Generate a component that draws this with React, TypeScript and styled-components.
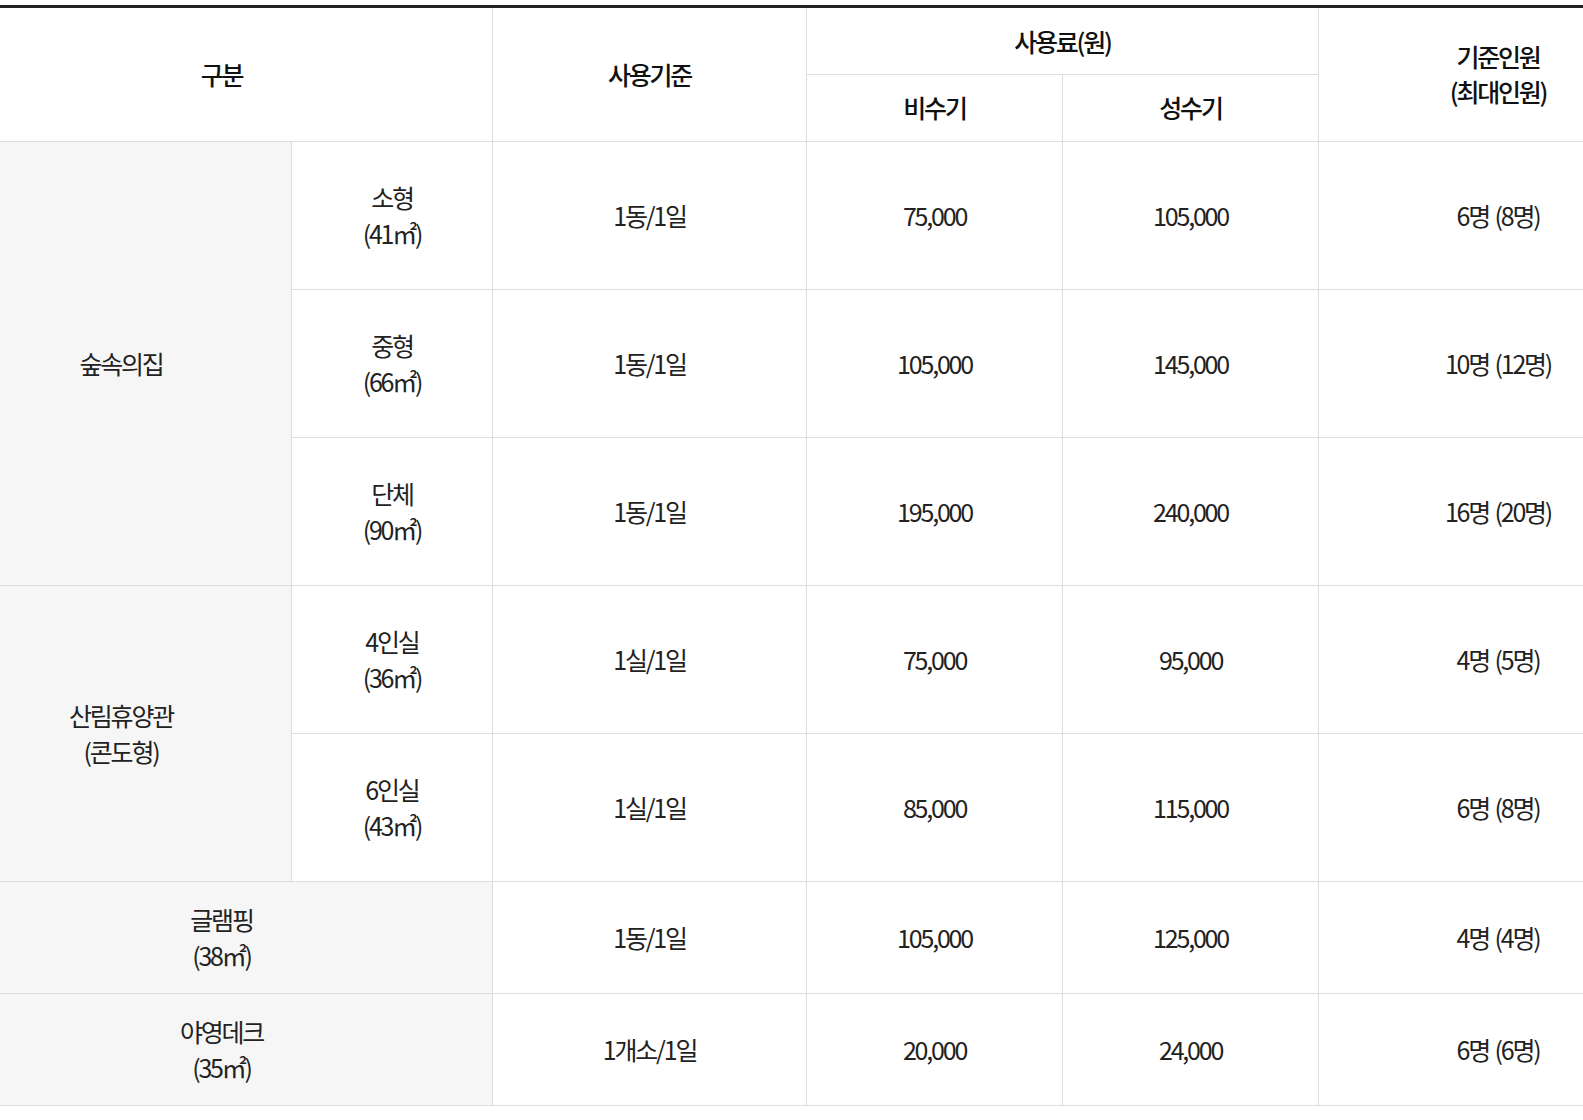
import React, { FC, useLayoutEffect, useRef } from "react";
import styled, { createGlobalStyle } from "styled-components";

interface IRoom {
  name: string;
  area: string;
  unit: string;
  low: string;
  high: string;
  people: string;
}

interface IGroup {
  title: string[];
  rooms: IRoom[];
}

const groups: IGroup[] = [
  {
    title: ["숲속의집"],
    rooms: [
      { name: "소형", area: "41", unit: "1동/1일", low: "75,000", high: "105,000", people: "6명 (8명)" },
      { name: "중형", area: "66", unit: "1동/1일", low: "105,000", high: "145,000", people: "10명 (12명)" },
      { name: "단체", area: "90", unit: "1동/1일", low: "195,000", high: "240,000", people: "16명 (20명)" },
    ],
  },
  {
    title: ["산림휴양관", "(콘도형)"],
    rooms: [
      { name: "4인실", area: "36", unit: "1실/1일", low: "75,000", high: "95,000", people: "4명 (5명)" },
      { name: "6인실", area: "43", unit: "1실/1일", low: "85,000", high: "115,000", people: "6명 (8명)" },
    ],
  },
];

const singles: IRoom[] = [
  { name: "글램핑", area: "38", unit: "1동/1일", low: "105,000", high: "125,000", people: "4명 (4명)" },
  { name: "야영데크", area: "35", unit: "1개소/1일", low: "20,000", high: "24,000", people: "6명 (6명)" },
];

const colWidths = [341, 201, 314, 256, 256, 359];

const Lines: FC<{ lines: string[] }> = ({ lines }) => (
  <>
    {lines.map((line, i) => (
      <Line key={i}>{line}</Line>
    ))}
  </>
);

const App: FC = () => {
  const scrollRef = useRef<HTMLDivElement>(null);

  // the table is shown scrolled a little to the right
  useLayoutEffect(() => {
    if (scrollRef.current) scrollRef.current.scrollLeft = 50;
  }, []);

  return (
    <>
      <GlobalStyle />
      <Root>
        <ScrollArea ref={scrollRef}>
          <Table>
            <colgroup>
              {colWidths.map((w, i) => (
                <col key={i} style={{ width: w }} />
              ))}
            </colgroup>
            <thead>
              <Row $height={68}>
                <Th rowSpan={2} colSpan={2}>
                  구분
                </Th>
                <Th rowSpan={2}>사용기준</Th>
                <Th colSpan={2}>사용료(원)</Th>
                <Th rowSpan={2}>
                  <Lines lines={["기준인원", "(최대인원)"]} />
                </Th>
              </Row>
              <Row $height={66.5}>
                <Th>비수기</Th>
                <Th>성수기</Th>
              </Row>
            </thead>
            <tbody>
              {groups.map((group) =>
                group.rooms.map((room, i) => (
                  <Row key={room.name} $height={148}>
                    {i === 0 && (
                      <Td rowSpan={group.rooms.length} $shade>
                        <Lines lines={group.title} />
                      </Td>
                    )}
                    <Td>
                      <Lines lines={[room.name, `(${room.area}㎡)`]} />
                    </Td>
                    <Td>{room.unit}</Td>
                    <Td>{room.low}</Td>
                    <Td>{room.high}</Td>
                    <Td>{room.people}</Td>
                  </Row>
                ))
              )}
              {singles.map((room) => (
                <Row key={room.name} $height={112}>
                  <Td colSpan={2} $shade>
                    <Lines lines={[room.name, `(${room.area}㎡)`]} />
                  </Td>
                  <Td>{room.unit}</Td>
                  <Td>{room.low}</Td>
                  <Td>{room.high}</Td>
                  <Td>{room.people}</Td>
                </Row>
              ))}
            </tbody>
          </Table>
        </ScrollArea>
      </Root>
    </>
  );
};

export default App;

const GlobalStyle = createGlobalStyle`
  html, body {
    margin: 0;
    padding: 0;
    background: #ffffff;
    overflow: hidden;
  }

  body {
    font-family: "Noto Sans CJK KR", "Noto Sans", sans-serif;
    color: #222222;
  }
`;

const Root = styled.div`
  width: 100%;
  padding-top: 5px;
`;

const ScrollArea = styled.div`
  width: 100%;
  overflow-x: auto;
  scrollbar-width: none;

  &::-webkit-scrollbar {
    display: none;
  }
`;

const Table = styled.table`
  width: 1727px;
  table-layout: fixed;
  border-collapse: collapse;
  border-top: 3px solid #222222;
  font-size: 25px;
  letter-spacing: -2.2px;
  word-spacing: 2px;
`;

const Row = styled.tr<{ $height: number }>`
  height: ${({ $height }) => $height}px;
`;

const Th = styled.th`
  padding: 0;
  border: 1px solid #dddddd;
  border-top: 0;
  font-weight: 500;
  color: #111111;
  text-align: center;
  vertical-align: middle;
  line-height: 35px;
`;

const Td = styled.td<{ $shade?: boolean }>`
  padding: 0;
  border: 1px solid #dddddd;
  background-color: ${({ $shade }) => ($shade ? "#f6f6f6" : "#ffffff")};
  font-weight: 400;
  text-align: center;
  vertical-align: middle;
  line-height: 36px;
`;

const Line = styled.span`
  display: block;
`;
